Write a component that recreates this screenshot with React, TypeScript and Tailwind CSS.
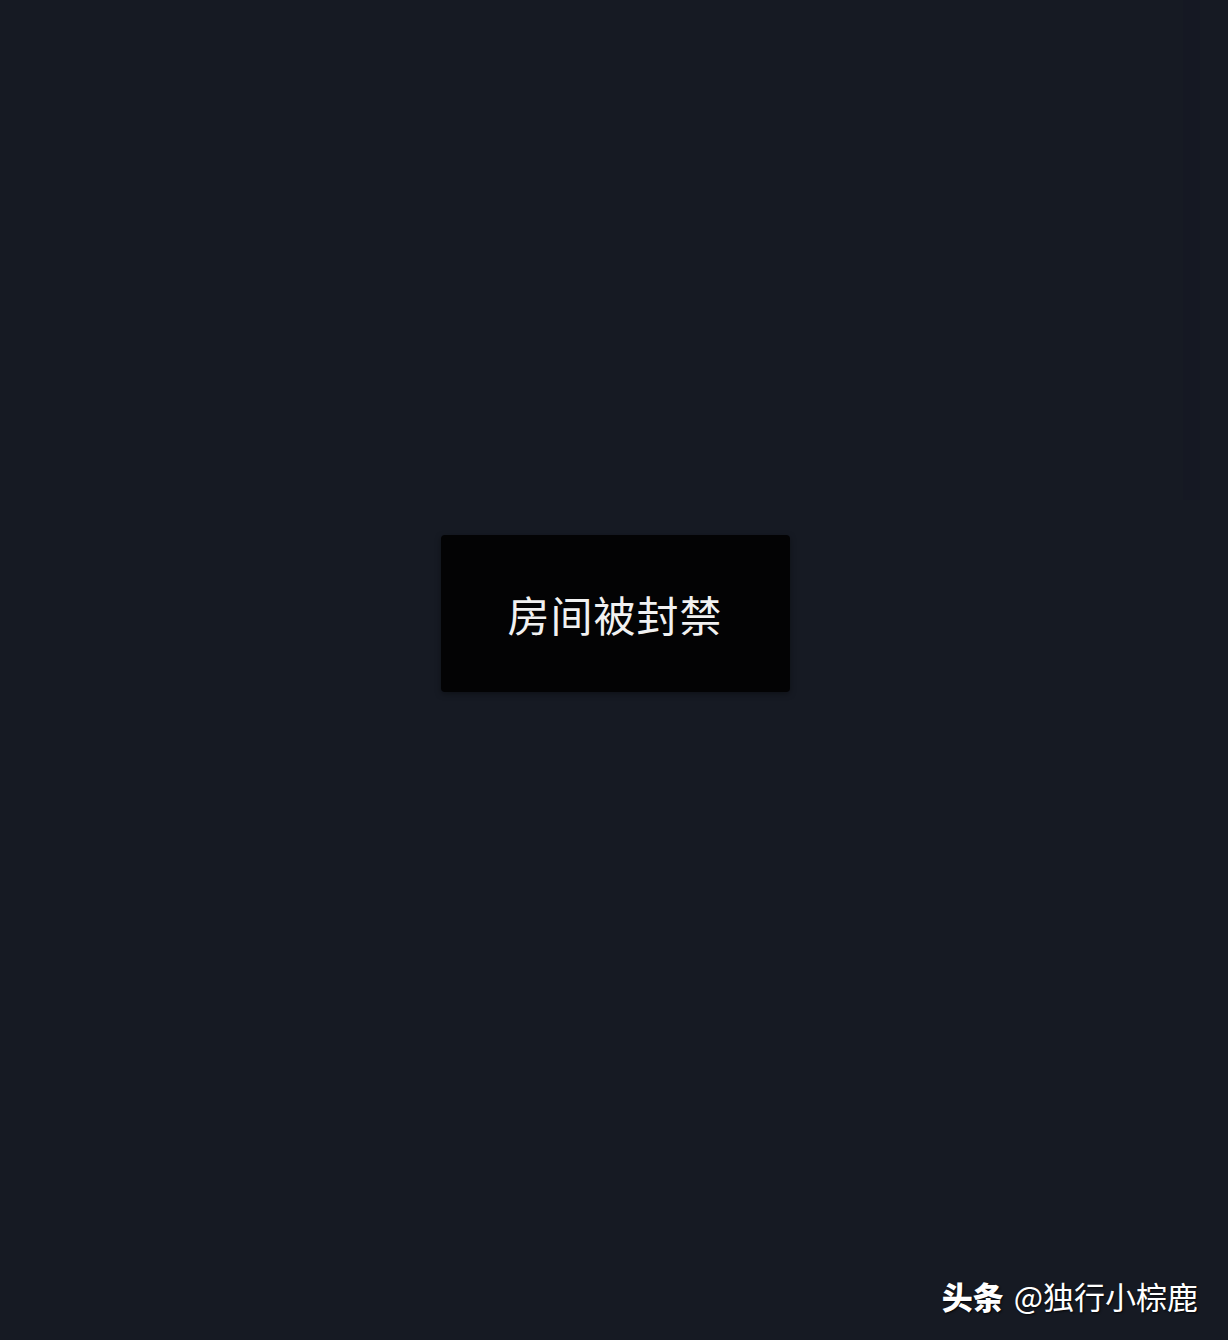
export default function App() {
  return (
    <div
      className="relative w-[1228px] h-[1340px] bg-[#161a23] flex flex-col items-center overflow-hidden"
      style={{ fontFamily: '"Noto Sans CJK SC", "Noto Sans", sans-serif' }}
    >
      {/* faint darker band at the right edge */}
      <div className="absolute right-[28px] top-0 w-[17px] h-[500px] bg-[#151823]" />

      <div className="mt-[535px] ml-[2px] w-[349px] h-[157px] rounded-[4px] bg-[#030304] flex items-center justify-center shadow-[0_2px_6px_rgba(0,0,0,0.35)]">
        <span className="text-[42px] leading-none text-[#f1f1f1] tracking-[1px]">房间被封禁</span>
      </div>

      <div className="mt-auto mb-[29px] self-end mr-[30px] flex items-baseline text-[31px] leading-none text-white [text-shadow:1px_1px_2px_rgba(0,0,0,0.8)]">
        <span className="font-black">头条</span>
        <span className="ml-[10px]">@独行小棕鹿</span>
      </div>
    </div>
  )
}
